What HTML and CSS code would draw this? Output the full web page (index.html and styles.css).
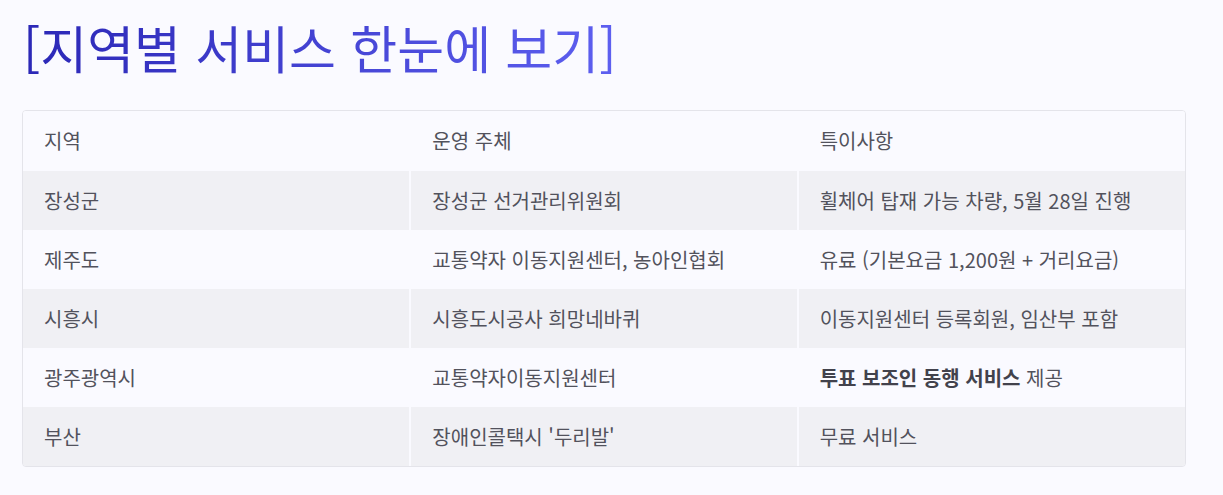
FILE: index.html
```html
<!DOCTYPE html>
<html lang="ko">
<head>
<meta charset="utf-8">
<title>지역별 서비스 한눈에 보기</title>
<link rel="stylesheet" href="styles.css">
</head>
<body>
<main class="page">
  <h1 class="title">[지역별 서비스 한눈에 보기]</h1>
  <div class="table-wrap">
    <table class="services">
      <thead>
        <tr><th>지역</th><th>운영 주체</th><th>특이사항</th></tr>
      </thead>
      <tbody>
        <tr><td>장성군</td><td>장성군 선거관리위원회</td><td>휠체어 탑재 가능 차량, 5월 28일 진행</td></tr>
        <tr><td>제주도</td><td>교통약자 이동지원센터, 농아인협회</td><td>유료 (기본요금 1,200원 + 거리요금)</td></tr>
        <tr><td>시흥시</td><td>시흥도시공사 희망네바퀴</td><td>이동지원센터 등록회원, 임산부 포함</td></tr>
        <tr><td>광주광역시</td><td>교통약자이동지원센터</td><td><strong>투표 보조인 동행 서비스</strong> 제공</td></tr>
        <tr><td>부산</td><td>장애인콜택시 '두리발'</td><td>무료 서비스</td></tr>
      </tbody>
    </table>
  </div>
</main>
</body>
</html>
```

FILE: styles.css
```css
html, body {
  margin: 0;
  padding: 0;
  background: #fafaff;
}
body {
  font-family: "Noto Sans CJK KR", "Noto Sans", sans-serif;
  color: #52525c;
}
.page {
  padding: 11px 37px 28px 22px;
}
.title {
  margin: 0 0 25px 1px;
  font-size: 51px;
  font-weight: 400;
  line-height: 1.45;
  background: linear-gradient(90deg, #2b27b6 0%, #5d5ff0 100%);
  -webkit-background-clip: text;
  background-clip: text;
  color: transparent;
  display: inline-block;
}
.table-wrap {
  border: 1px solid #e4e4ea;
  border-radius: 4px;
  overflow: hidden;
}
.services {
  width: 100%;
  border-collapse: collapse;
  table-layout: fixed;
  font-size: 20px;
  line-height: 27px;
}
.services th,
.services td {
  text-align: left;
  font-weight: 400;
  padding: 16px 21px;
  border-right: 2px solid #fafaff;
}
.services th:last-child,
.services td:last-child {
  border-right: none;
}
.services thead tr {
  background: #fafaff;
}
.services th {
  padding-top: 16px;
  padding-bottom: 17px;
}
.services tbody tr:nth-child(odd) {
  background: #f0f0f4;
}
.services tbody tr:nth-child(even) {
  background: #fafaff;
}
.services strong {
  font-weight: 700;
  color: #42424c;
}
```
